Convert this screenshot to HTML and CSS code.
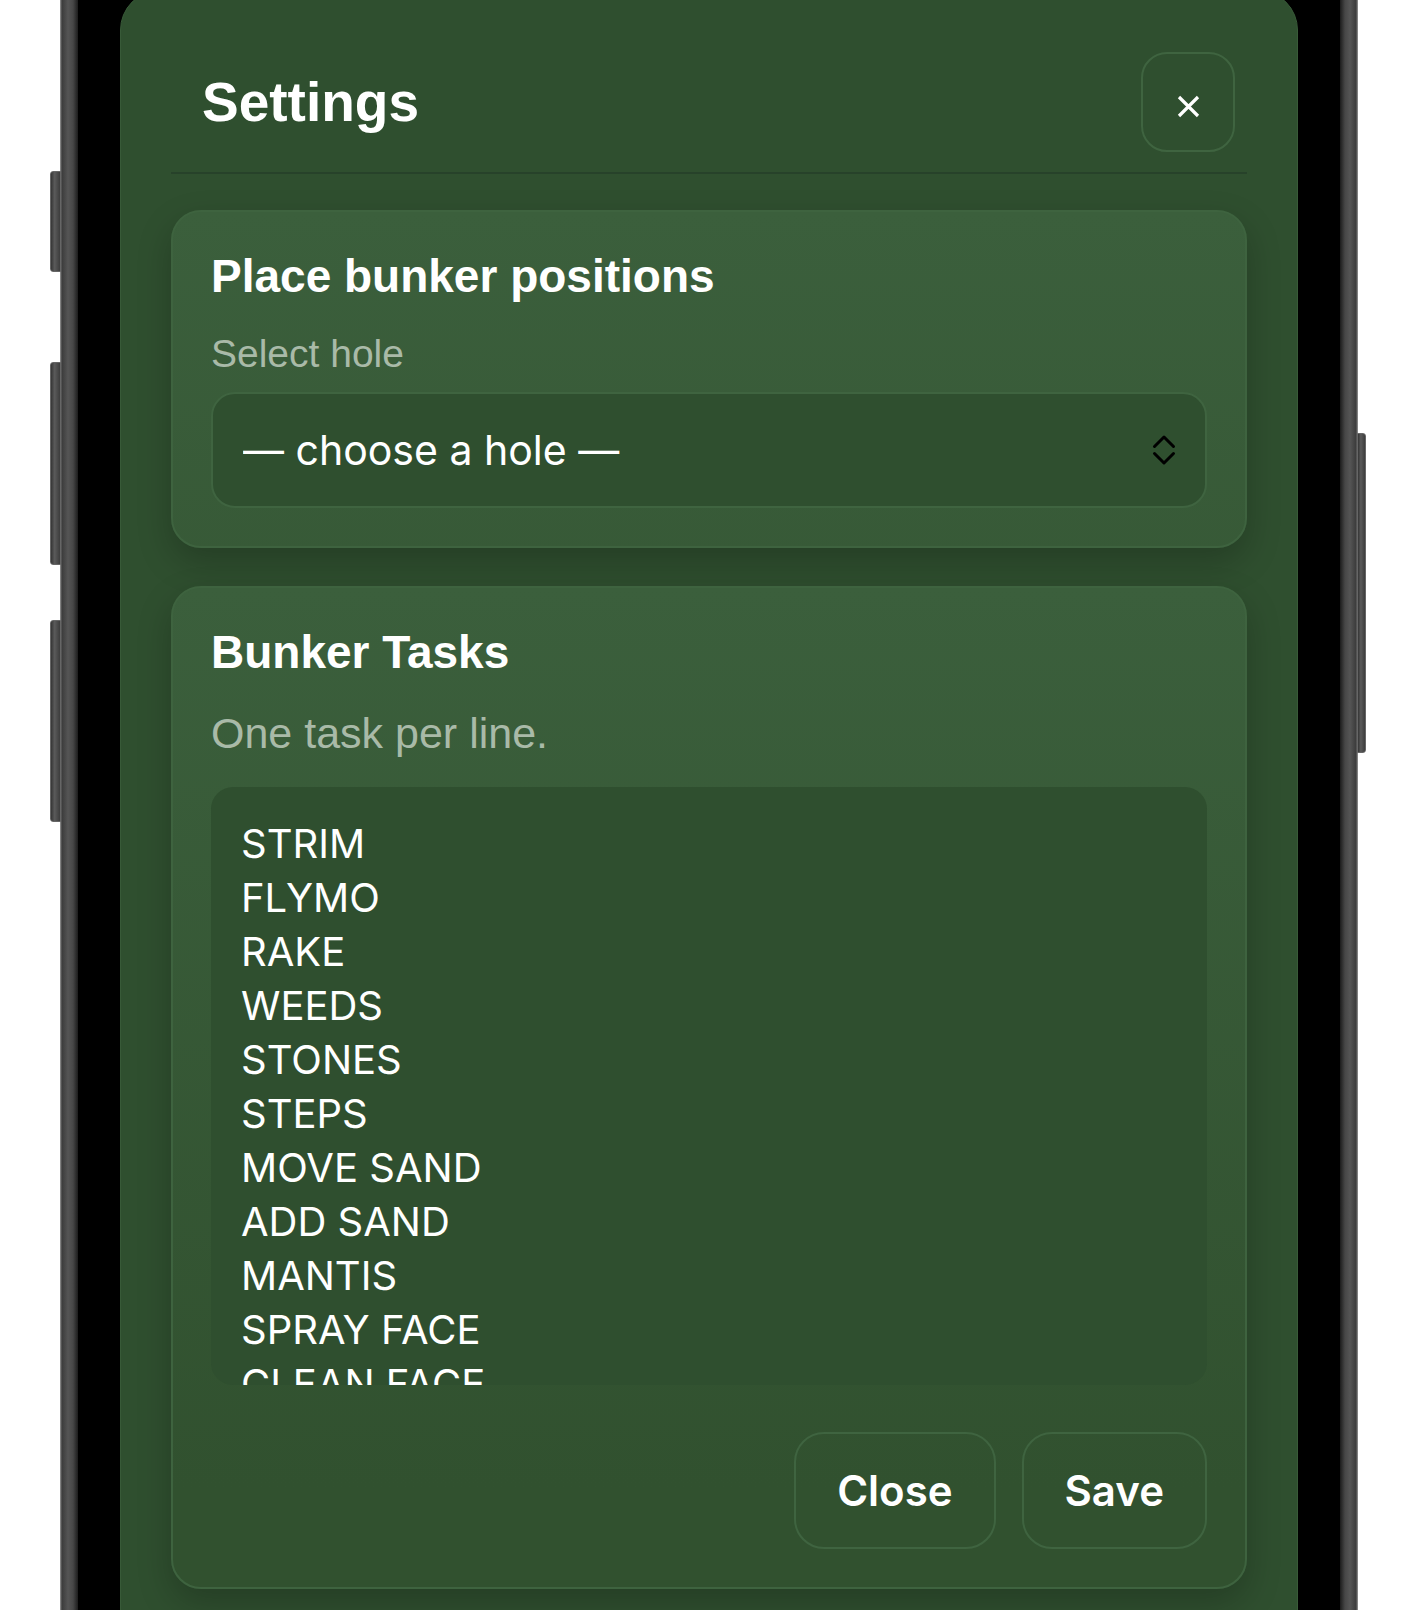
FILE: index.html
```html
<!DOCTYPE html>
<html lang="en">
<head>
  <meta charset="UTF-8" />
  <meta name="viewport" content="width=device-width, initial-scale=1.0" />
  <title>Settings</title>
  <link rel="stylesheet" href="styles.css">
</head>
<body>
  <div class="phone">
    <!-- side hardware -->
    <span class="hw hw-action"></span>
    <span class="hw hw-vol-up"></span>
    <span class="hw hw-vol-down"></span>
    <span class="hw hw-power"></span>

    <div class="screen">
      <div class="modal">
        <header class="modal-head">
          <h1>Settings</h1>
          <button class="icon-btn" type="button" aria-label="Close">
            <svg width="23" height="23" viewBox="0 0 23 23" fill="none" stroke="#fff" stroke-width="3.2">
              <path d="M2 2 L21 21 M21 2 L2 21" />
            </svg>
          </button>
        </header>

        <!-- BUNKER POSITIONS -->
        <section class="card">
          <h2>Place bunker positions</h2>
          <label for="hole">Select hole</label>
          <div class="select-wrap">
            <select id="hole">
              <option value="">— choose a hole —</option>
            </select>
            <svg class="chev" width="24" height="32" viewBox="0 0 24 32" fill="none" stroke="#000" stroke-width="3" stroke-linecap="round" stroke-linejoin="round">
              <path d="M2.5 12.5 L12 3 L21.5 12.5" />
              <path d="M2.5 19.5 L12 29 L21.5 19.5" />
            </svg>
          </div>
        </section>

        <!-- TASKS -->
        <section class="card">
          <h2>Bunker Tasks</h2>
          <p class="hint">One task per line.</p>
          <textarea id="tasks" spellcheck="false">STRIM
FLYMO
RAKE
WEEDS
STONES
STEPS
MOVE SAND
ADD SAND
MANTIS
SPRAY FACE
CLEAN FACE
EDGE</textarea>
          <div class="actions">
            <button class="btn" type="button">Close</button>
            <button class="btn" type="button">Save</button>
          </div>
        </section>
      </div>
    </div>
  </div>
</body>
</html>
```

FILE: styles.css
```css
:root {
  --modal-bg: #2f4f2f;
  --card-top: #3b5f3c;
  --card-bottom: #31512f;
  --field-bg: #2f4f2f;
  --line: #3f6440;
  --muted: #a9baa8;
}

* { box-sizing: border-box; margin: 0; padding: 0; }

body {
  background: #fff;
  font-family: "Liberation Sans", Arial, sans-serif;
  color: #fff;
  overflow: hidden;
  height: 1610px;
}

/* phone body */
.phone {
  position: relative;
  width: 1298px;
  height: 2100px;
  margin: -300px 0 0 60px;
  padding: 0 18px;
  border-radius: 160px;
  background: linear-gradient(90deg,
    #9a9a9a 0, #3c3c3c 2px, #555 8px, #474747 13px, #1c1c1c 18px,
    #1c1c1c calc(100% - 18px), #474747 calc(100% - 13px), #555 calc(100% - 8px),
    #3c3c3c calc(100% - 2px), #9a9a9a 100%);
}

.hw {
  position: absolute;
  background: linear-gradient(90deg, #353535, #5a5a5a 40%, #3c3c3c);
  border: 1px solid #666;
}
.hw-action   { left: -10px; top: 471px; width: 11px; height: 101px; border-radius: 3px 0 0 3px; }
.hw-vol-up   { left: -10px; top: 662px; width: 11px; height: 203px; border-radius: 3px 0 0 3px; }
.hw-vol-down { left: -10px; top: 920px; width: 11px; height: 202px; border-radius: 3px 0 0 3px; }
.hw-power    { right: -8px; top: 733px; width: 9px; height: 320px; border-radius: 0 3px 3px 0; }

.screen {
  height: 100%;
  background: #000;
  border-radius: 140px;
  padding: 290px 42px 0;
}

/* modal */
.modal {
  height: 100%;
  background: var(--modal-bg);
  border: 1px solid #385a38;
  border-radius: 40px;
  padding: 0 50px 40px;
}

.modal-head {
  display: flex;
  align-items: center;
  justify-content: space-between;
  padding: 61px 12px 20px 31px;
  border-bottom: 2px solid #27422a;
}
.modal-head h1 {
  font-size: 55px;
  line-height: 62px;
  font-weight: 700;
}

.icon-btn {
  width: 94px;
  height: 100px;
  padding-top: 8px;
  display: flex;
  align-items: center;
  justify-content: center;
  background: transparent;
  border: 2px solid var(--line);
  border-radius: 26px;
  cursor: pointer;
}

/* cards */
.card {
  margin-top: 36px;
  padding: 38px;
  border: 2px solid #3e633f;
  border-radius: 30px;
  background: linear-gradient(180deg, var(--card-top) 0, var(--card-bottom) 900px);
  box-shadow: 0 14px 34px rgba(0, 0, 0, 0.22);
}
.card + .card { margin-top: 38px; }

.card h2 {
  font-size: 46px;
  line-height: 53px;
  font-weight: 700;
  margin-bottom: 28px;
}

.card label {
  display: block;
  font-size: 39px;
  line-height: 45px;
  color: var(--muted);
  margin-bottom: 16px;
}

.hint {
  font-size: 43px;
  line-height: 48px;
  color: var(--muted);
  margin: 30px 0;
}
.card h2:has(+ .hint) { margin-bottom: 0; }

.select-wrap { position: relative; }
.select-wrap select {
  width: 100%;
  height: 116px;
  appearance: none;
  -webkit-appearance: none;
  background: var(--field-bg);
  border: 2px solid var(--line);
  border-radius: 24px;
  padding: 0 80px 0 30px;
  font-family: Inter, "Noto Sans", sans-serif;
  font-size: 41px;
  color: #fff;
  outline: none;
}
.chev {
  position: absolute;
  right: 31px;
  top: 42px;
  pointer-events: none;
}

textarea {
  display: block;
  width: 100%;
  height: 598px;
  padding: 30px;
  border: none;
  border-radius: 22px;
  background: var(--field-bg);
  font-family: Inter, "Noto Sans", sans-serif;
  font-size: 40px;
  line-height: 54px;
  color: #fff;
  resize: none;
  overflow: hidden;
  outline: none;
}

.actions {
  display: flex;
  justify-content: flex-end;
  gap: 26px;
  margin-top: 47px;
}
.btn {
  height: 117px;
  padding: 0 41px;
  background: transparent;
  border: 2px solid var(--line);
  border-radius: 30px;
  font-family: Inter, "Noto Sans", sans-serif;
  font-size: 42px;
  font-weight: 600;
  color: #fff;
  cursor: pointer;
}
```
